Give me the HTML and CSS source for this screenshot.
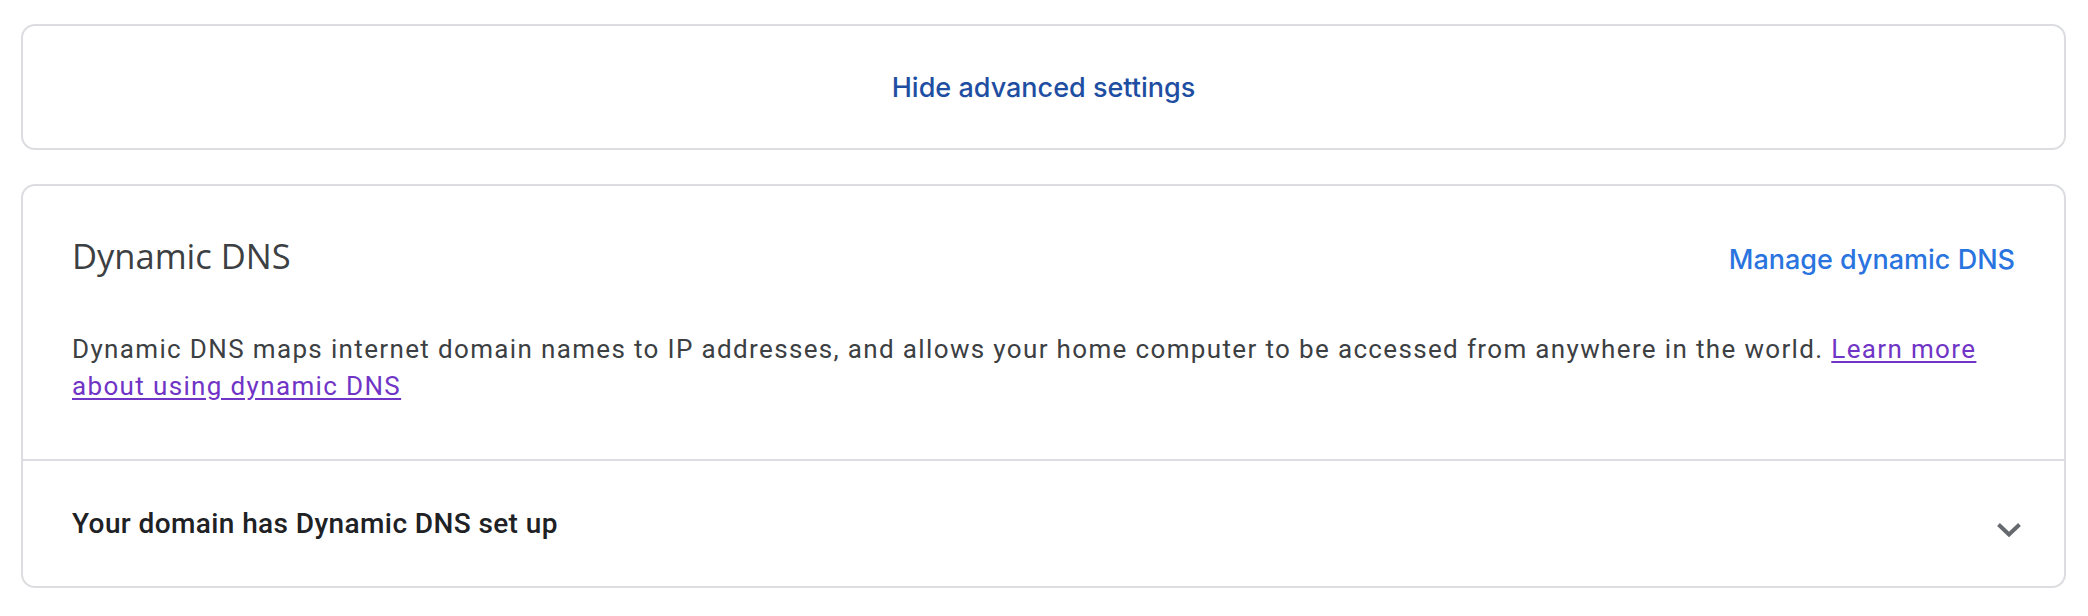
FILE: index.html
```html
<!DOCTYPE html>
<html lang="en">
<head>
<meta charset="utf-8">
<title>Dynamic DNS</title>
<link rel="stylesheet" href="styles.css">
</head>
<body>
<main class="page">
  <section class="card toggle-card">
    <button class="toggle-btn" type="button">Hide advanced settings</button>
  </section>
  <section class="card ddns-card">
    <div class="ddns-top">
      <div class="ddns-head">
        <h2 class="ddns-title">Dynamic DNS</h2>
        <a class="manage-link" href="#">Manage dynamic DNS</a>
      </div>
      <p class="ddns-desc">Dynamic DNS maps internet domain names to IP addresses, and allows your home computer to be accessed from anywhere in the world. <a class="learn-link" href="#">Learn more about using dynamic DNS</a></p>
    </div>
    <div class="ddns-row">
      <span class="row-label">Your domain has Dynamic DNS set up</span>
      <svg class="chevron" width="24" height="14" viewBox="0 0 24 14" aria-hidden="true">
        <path d="M1.5 1.5 L12 11.5 L22.5 1.5" fill="none" stroke="#666a6e" stroke-width="4"/>
      </svg>
    </div>
  </section>
</main>
</body>
</html>
```
FILE: styles.css
```css
html, body {
  margin: 0;
  padding: 0;
  background: #ffffff;
}
.page {
  padding: 24px 22px 0 21px;
  display: flex;
  flex-direction: column;
  gap: 34px;
}
.card {
  border: 2px solid #dcdde0;
  border-radius: 14px;
  background: #fff;
}
.toggle-card {
  height: 122px;
  display: flex;
  align-items: center;
  justify-content: center;
}
.toggle-btn {
  border: 0;
  background: none;
  padding: 0;
  font-family: Inter, "Open Sans", sans-serif;
  font-size: 27px;
  font-weight: 500;
  color: #1e4ea2;
  cursor: pointer;
}
.ddns-card {
  display: flex;
  flex-direction: column;
}
.ddns-top {
  padding: 50px 49px 54px 49px;
  border-bottom: 2px solid #dcdde0;
}
.ddns-head {
  display: flex;
  justify-content: space-between;
  align-items: baseline;
}
.ddns-title {
  margin: 0;
  font-family: "Open Sans", Roboto, sans-serif;
  font-weight: 400;
  font-size: 34.5px;
  line-height: 40px;
  color: #3c4043;
}
.manage-link {
  font-family: Inter, "Open Sans", sans-serif;
  font-size: 27px;
  font-weight: 500;
  color: #2a74e0;
  text-decoration: none;
}
.ddns-desc {
  margin: 55px 0 0;
  font-family: Roboto, "Liberation Sans", sans-serif;
  font-size: 26px;
  line-height: 37px;
  letter-spacing: 1.35px;
  color: #3c4043;
}
.learn-link {
  color: #7034c6;
  text-decoration: underline;
  text-underline-offset: 3px;
}
.ddns-row {
  height: 125px;
  padding: 0 43px 0 49px;
  display: flex;
  align-items: center;
  justify-content: space-between;
}
.row-label {
  font-family: Roboto, "Liberation Sans", sans-serif;
  font-weight: 500;
  font-size: 28px;
  letter-spacing: 0.4px;
  color: #202124;
}
.chevron {
  display: block;
  margin-top: 13px;
}
```
